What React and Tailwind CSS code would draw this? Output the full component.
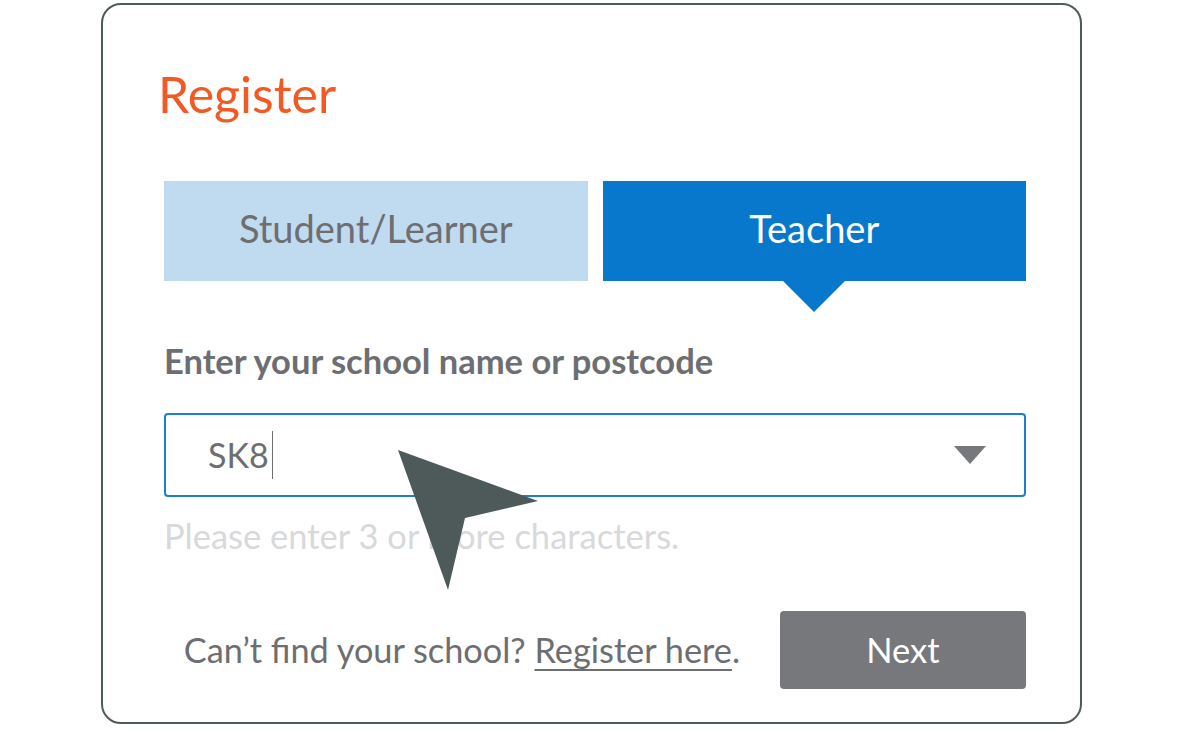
export default function App() {
  return (
    <div className="relative w-[1184px] h-[730px] bg-white overflow-hidden" style={{ fontFamily: "Lato, 'Open Sans', sans-serif" }}>
      <div className="absolute left-[101px] top-[3px] w-[981px] h-[721px] rounded-[20px] border-2 border-[#4f5b5b] pl-[61px] box-border">
        <div className="w-[862px] flex flex-col">
          <h1 className="mt-[64px] text-[50px] leading-none text-[#f15a24] -ml-[6px]">Register</h1>

          {/* tabs */}
          <div className="mt-[62px] flex gap-[15px]">
            <button className="flex-1 h-[100px] pb-[6px] bg-[#c0daf0] text-[#6d6e71] text-[38px] leading-none">
              Student/Learner
            </button>
            <button className="relative flex-1 h-[100px] pb-[6px] bg-[#0778cb] text-white text-[38px] leading-none">
              Teacher
              <span className="absolute left-1/2 top-full -translate-x-1/2 w-0 h-0 border-l-[31px] border-r-[31px] border-t-[31px] border-l-transparent border-r-transparent border-t-[#0778cb]" />
            </button>
          </div>

          <label className="mt-[63px] text-[34.5px] leading-none font-bold text-[#6d6e71]">
            Enter your school name or postcode
          </label>

          {/* input */}
          <div className="mt-[34px] h-[84px] rounded-[4px] border-2 border-[#1b7fd1] flex items-center pl-[42px] pr-[38px]">
            <span className="text-[34px] leading-none text-[#6d6e71]">SK8</span>
            <span className="ml-[3px] w-px h-[48px] bg-[#6d6e71]" />
            <svg className="ml-auto" width="32" height="18" viewBox="0 0 32 18">
              <path d="M0 0 H32 L16 18 Z" fill="#77787b" />
            </svg>
          </div>

          <p className="mt-[22px] text-[34.5px] leading-none text-[#d8d9da]">
            Please enter 3 or more characters.
          </p>

          {/* footer */}
          <div className="mt-[58px] flex items-center justify-end gap-[40px]">
            <p className="text-[34.3px] leading-none text-[#6d6e71]">
              Can’t find your school?{" "}
              <a className="underline decoration-[2px] underline-offset-[6px] decoration-[#6d6e71]">Register here</a>.
            </p>
            <button className="w-[246px] h-[78px] rounded-[4px] bg-[#77787b] text-white text-[34.5px] leading-none">
              Next
            </button>
          </div>
        </div>
      </div>

      {/* pointer */}
      <svg className="absolute left-0 top-0" width="1184" height="730" viewBox="0 0 1184 730">
        <path d="M398 450 L538 501 L465 518 L448 590 Z" fill="#4e5a5a" />
      </svg>
    </div>
  );
}
